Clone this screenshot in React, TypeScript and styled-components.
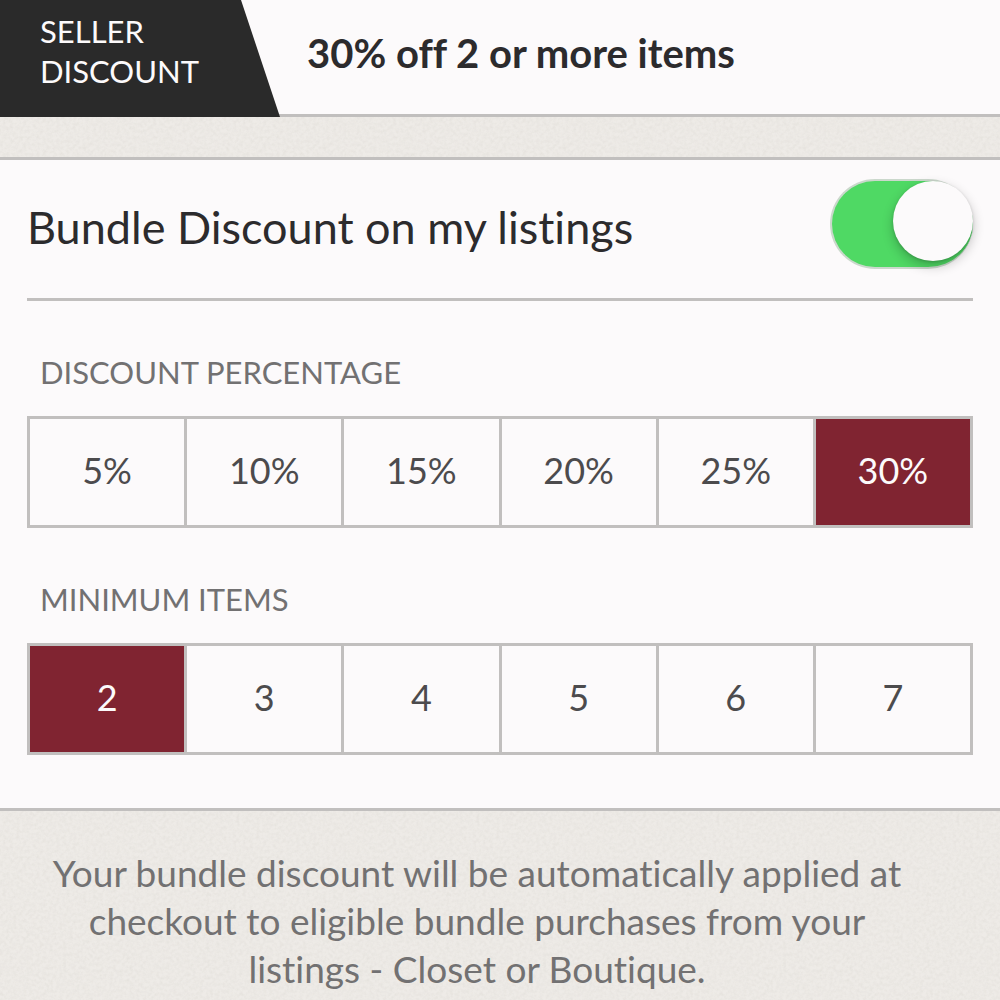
import React, { useState } from "react";
import styled, { createGlobalStyle } from "styled-components";

const color = {
  surface: "#fcfafb",
  ink: "#2c2b2d",
  tag: "#2a2a2a",
  option: "#4c4b4d",
  muted: "#727172",
  rule: "#c1bfbe",
  accent: "#802431",
  paper: "#eeebe7",
  on: "#4fd964",
};

const grain = `url("data:image/svg+xml,${encodeURIComponent(
  "<svg xmlns='http://www.w3.org/2000/svg' width='240' height='240'><filter id='n' x='0' y='0' width='100%' height='100%'><feTurbulence type='fractalNoise' baseFrequency='0.3' numOctaves='3' stitchTiles='stitch'/><feColorMatrix values='0 0 0 0 0.5 0 0 0 0 0.48 0 0 0 0 0.43 1.2 1.2 0 0 -0.9'/></filter><rect width='240' height='240' filter='url(#n)' opacity='0.16'/></svg>"
)}")`;

const GlobalStyle = createGlobalStyle`
  *, *::before { box-sizing: border-box; }
  body {
    margin: 0;
    background: ${color.paper};
    color: ${color.ink};
    font-family: Lato, "Open Sans", sans-serif;
    font-variant-ligatures: none;
  }
`;

const Page = styled.main`
  display: flex;
  flex-direction: column;
  min-height: 100vh;
  background: ${color.paper} ${grain};
`;

const Banner = styled.header`
  display: flex;
  align-items: stretch;
  background: ${color.surface};
  box-shadow: inset 0 -3px ${color.rule};
`;

const Tag = styled.div`
  width: 280px;
  flex: none;
  padding: 11px 40px 26px;
  background: ${color.tag};
  color: ${color.surface};
  clip-path: polygon(0 0, 241px 0, 100% 100%, 0 100%);
  font-size: 31px;
  line-height: 40px;
  text-transform: uppercase;
`;

const Offer = styled.h1`
  margin: 0;
  padding: 29px 27px 0;
  font-size: 40px;
  line-height: 48px;
  font-weight: 700;
`;

const Panel = styled.section`
  margin-top: 40px;
  padding: 0 27px 53px;
  background: ${color.surface};
  border: solid ${color.rule};
  border-width: 3px 0;
`;

const ToggleRow = styled.div`
  display: flex;
  align-items: center;
  justify-content: space-between;
  padding: 19px 0 29px;
  border-bottom: 3px solid ${color.rule};
`;

const ToggleLabel = styled.label`
  font-size: 45px;
  line-height: 56px;
  padding-top: 6px;
`;

const Switch = styled.input`
  appearance: none;
  display: flex;
  flex: none;
  width: 143px;
  height: 90px;
  margin: 0;
  border: 2px solid #cbd8cc;
  border-right-width: 0;
  border-radius: 45px;
  background: #e4e3e5;
  cursor: pointer;

  &::before {
    content: "";
    width: 80px;
    height: 80px;
    border-radius: 50%;
    background: ${color.surface};
    box-shadow: 0 5px 12px rgba(0, 0, 0, 0.24), 0 1px 3px rgba(0, 0, 0, 0.16);
  }

  &:checked {
    justify-content: flex-end;
    background: ${color.on};
  }
`;

const Group = styled.fieldset`
  min-width: 0;
  margin: 0;
  padding: 0;
  border: 0;
`;

const GroupTitle = styled.legend`
  padding: 51px 13px 24px;
  color: ${color.muted};
  font-size: 31px;
  line-height: 40px;
  text-transform: uppercase;
`;

const Segments = styled.div`
  display: grid;
  grid-auto-flow: column;
  grid-auto-columns: 1fr;
  gap: 3px;
  border: 3px solid ${color.rule};
  background: ${color.rule};
`;

const Segment = styled.label`
  position: relative;
  display: flex;
  align-items: center;
  justify-content: center;
  height: 106px;
  padding-bottom: 4px;
  background: ${color.surface};
  color: ${color.option};
  font-size: 36px;
  line-height: 48px;
  cursor: pointer;

  &:has(input:checked) {
    background: ${color.accent};
    color: ${color.surface};
  }
`;

const Radio = styled.input`
  position: absolute;
  inset: 0;
  appearance: none;
  margin: 0;
  cursor: pointer;
`;

const Note = styled.p`
  margin: 0;
  padding: 38px 86px 0 40px;
  color: ${color.muted};
  font-size: 37px;
  line-height: 48px;
  text-align: center;
`;

interface ChoiceProps {
  title: string;
  name: string;
  options: number[];
  suffix?: string;
  value: number;
  onChange: (value: number) => void;
}

function Choice({ title, name, options, suffix = "", value, onChange }: ChoiceProps) {
  return (
    <Group>
      <GroupTitle>{title}</GroupTitle>
      <Segments>
        {options.map((option) => (
          <Segment key={option}>
            <Radio
              type="radio"
              name={name}
              value={option}
              checked={option === value}
              onChange={() => onChange(option)}
            />
            {`${option}${suffix}`}
          </Segment>
        ))}
      </Segments>
    </Group>
  );
}

export default function App() {
  const [enabled, setEnabled] = useState(true);
  const [percent, setPercent] = useState(30);
  const [minimum, setMinimum] = useState(2);

  return (
    <>
      <GlobalStyle />
      <Page>
        <Banner>
          <Tag>Seller Discount</Tag>
          <Offer>{`${percent}% off ${minimum} or more items`}</Offer>
        </Banner>
        <Panel>
          <ToggleRow>
            <ToggleLabel htmlFor="bundle">Bundle Discount on my listings</ToggleLabel>
            <Switch
              id="bundle"
              type="checkbox"
              role="switch"
              checked={enabled}
              onChange={(event) => setEnabled(event.target.checked)}
            />
          </ToggleRow>
          <Choice
            title="Discount Percentage"
            name="percentage"
            options={[5, 10, 15, 20, 25, 30]}
            suffix="%"
            value={percent}
            onChange={setPercent}
          />
          <Choice
            title="Minimum Items"
            name="minimum"
            options={[2, 3, 4, 5, 6, 7]}
            value={minimum}
            onChange={setMinimum}
          />
        </Panel>
        <Note>
          Your bundle discount will be automatically applied at checkout to eligible bundle
          purchases from your listings - Closet or Boutique.
        </Note>
      </Page>
    </>
  );
}
